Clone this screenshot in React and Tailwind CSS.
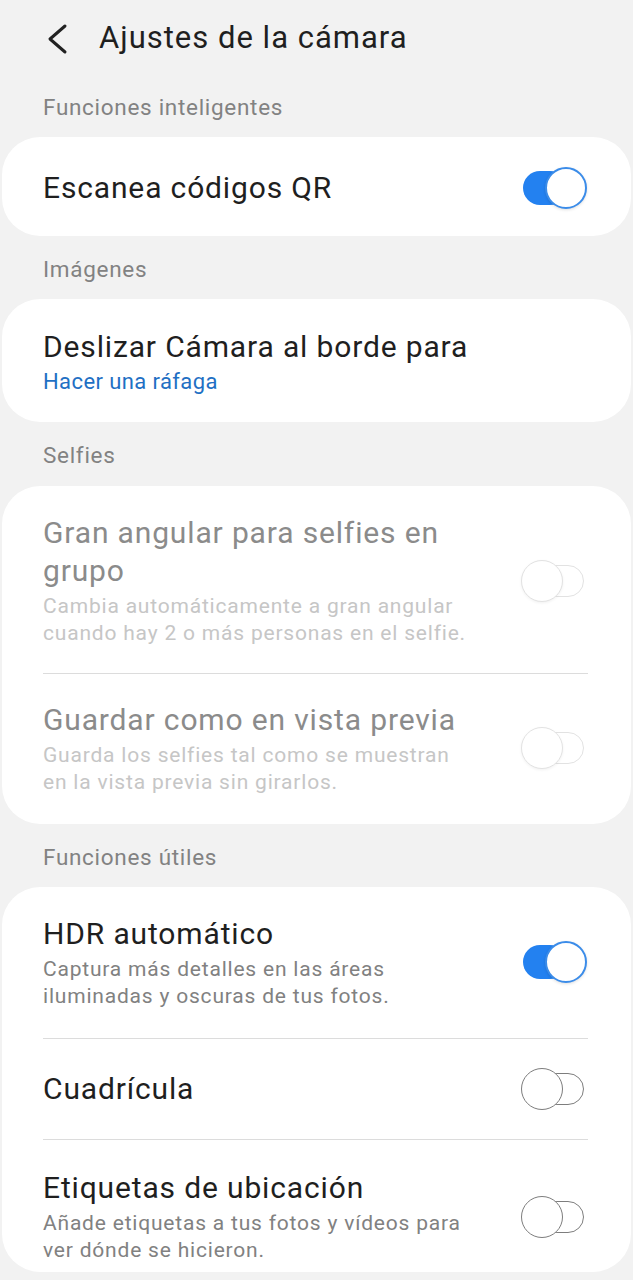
// App.jsx
// Pantalla de ajustes de la cámara (estilo One UI)

import React from 'react';

const Toggle = ({ on = false, disabled = false }) => {
  if (on) {
    return (
      <div className="relative w-[66px] h-[42px] shrink-0">
        <div className="absolute left-[2px] right-[20px] top-[4px] h-[34px] rounded-full bg-[#2381f0]" />
        <div className="absolute right-0 top-0 w-[42px] h-[42px] rounded-full bg-white border-2 border-[#3b8ce9] shadow-[0_1px_3px_rgba(0,0,0,0.12)]" />
      </div>
    );
  }
  const border = disabled ? 'border-[#e2e2e2]' : 'border-[#7d7d7d]';
  const shadow = disabled ? 'shadow-[0_1px_3px_rgba(0,0,0,0.06)]' : '';
  return (
    <div className="relative w-[66px] h-[42px] shrink-0 -ml-[3px]">
      <div className={`absolute left-[20px] right-[3px] top-[5px] h-[32px] rounded-full bg-white border-[1.5px] ${border}`} />
      <div className={`absolute left-0 top-0 w-[42px] h-[42px] rounded-full bg-white border-[1.5px] ${border} ${shadow}`} />
    </div>
  );
};

const SectionLabel = ({ children, className = '' }) => (
  <div className={`flex items-center pl-[43px] text-[22.5px] tracking-[0.7px] leading-[30px] text-[#828282] ${className}`}>
    {children}
  </div>
);

const Card = ({ children }) => (
  <div className="mx-[2px] bg-white rounded-[38px] overflow-hidden">{children}</div>
);

const Item = ({ title, desc, on, disabled, className = '' }) => (
  <div className={`flex items-center pl-[41px] pr-[44px] ${className}`}>
    <div className="flex-1">
      {title.map((t) => (
        <div
          key={t}
          className={`whitespace-nowrap text-[30px] tracking-[0.85px] leading-[38px] ${disabled ? 'text-[#8b8b8b]' : 'text-[#1f1f1f]'}`}
        >
          {t}
        </div>
      ))}
      {desc && (
        <div className="mt-[3px]">
          {desc.map((d) => (
            <div
              key={d}
              className={`whitespace-nowrap text-[21px] tracking-[0.8px] leading-[27px] ${disabled ? 'text-[#c6c6c6]' : 'text-[#818181]'}`}
            >
              {d}
            </div>
          ))}
        </div>
      )}
    </div>
    <Toggle on={on} disabled={disabled} />
  </div>
);

const Divider = () => <div className="ml-[41px] mr-[43px] h-px bg-[#dcdcdc]" />;

const App = () => {
  return (
    <div
      className="min-h-screen bg-[#f2f2f2] overflow-hidden"
      style={{ fontFamily: 'Roboto, "Noto Sans", sans-serif' }}
    >
      {/* cabecera */}
      <div className="h-[76px] flex items-center">
        <svg width="30" height="34" viewBox="0 0 30 34" className="ml-[41px] mt-[1px]" fill="none">
          <path d="M24 4 L9 17 L24 30" stroke="#222" strokeWidth="3" strokeLinecap="round" strokeLinejoin="round" />
        </svg>
        <div className="ml-[28px] text-[31px] tracking-[1px] leading-[38px] text-[#1f1f1f]">Ajustes de la cámara</div>
      </div>

      <SectionLabel className="h-[61px]">Funciones inteligentes</SectionLabel>
      <Card>
        <Item title={['Escanea códigos QR']} on className="h-[99px] pt-[2px]" />
      </Card>

      <SectionLabel className="h-[63px] pt-[3px]">Imágenes</SectionLabel>
      <Card>
        <div className="h-[123px] pl-[41px] pt-[29px]">
          <div className="text-[30px] tracking-[0.85px] leading-[38px] text-[#1f1f1f]">Deslizar Cámara al borde para</div>
          <div className="text-[22px] tracking-[0.4px] leading-[32px] text-[#1f70c4]">Hacer una ráfaga</div>
        </div>
      </Card>

      <SectionLabel className="h-[64px] pt-[2px]">Selfies</SectionLabel>
      <Card>
        <Item
          title={['Gran angular para selfies en', 'grupo']}
          desc={['Cambia automáticamente a gran angular', 'cuando hay 2 o más personas en el selfie.']}
          disabled
          className="h-[187px] pt-[2px]"
        />
        <Divider />
        <Item
          title={['Guardar como en vista previa']}
          desc={['Guarda los selfies tal como se muestran', 'en la vista previa sin girarlos.']}
          disabled
          className="h-[150px] pb-[2px]"
        />
      </Card>

      <SectionLabel className="h-[63px] pt-[3px]">Funciones útiles</SectionLabel>
      <Card>
        <Item
          title={['HDR automático']}
          desc={['Captura más detalles en las áreas', 'iluminadas y oscuras de tus fotos.']}
          on
          className="h-[151px] pb-[1px]"
        />
        <Divider />
        <Item title={['Cuadrícula']} className="h-[100px]" />
        <Divider />
        <Item
          title={['Etiquetas de ubicación']}
          desc={['Añade etiquetas a tus fotos y vídeos para', 'ver dónde se hicieron.']}
          className="pt-[29px] pb-[8px]"
        />
      </Card>
      <div className="h-[40px]" />
    </div>
  );
};

export default App;
